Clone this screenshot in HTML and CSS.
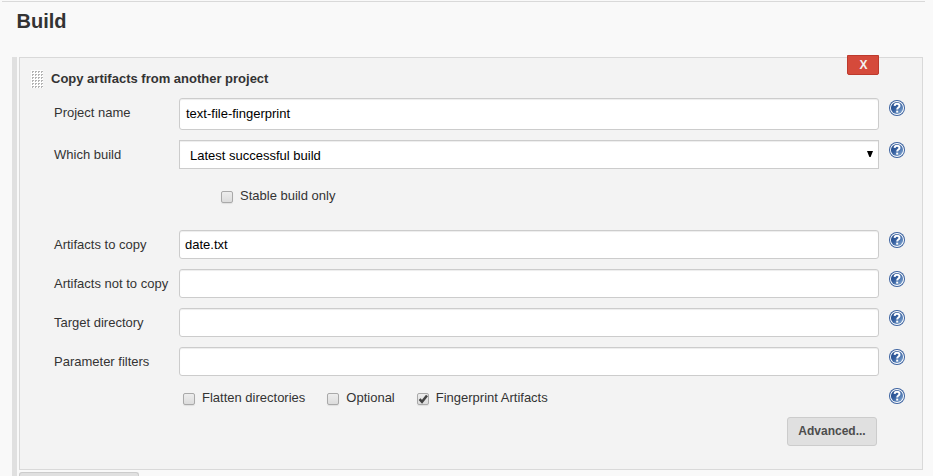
FILE: index.html
```html
<!DOCTYPE html>
<html lang="en">
<head>
<meta charset="utf-8">
<title>Build</title>
<link rel="stylesheet" href="styles.css">
</head>
<body>
<svg class="defs" width="0" height="0" aria-hidden="true">
  <defs>
    <linearGradient id="blue" x1="0" y1="0" x2="1" y2="1">
      <stop offset="0" stop-color="#1f4686"/>
      <stop offset=".45" stop-color="#355f9f"/>
      <stop offset="1" stop-color="#8fb4dc"/>
    </linearGradient>
    <symbol id="help" viewBox="0 0 16 16">
      <circle cx="8" cy="8" r="8" fill="#3b62a0"/>
      <circle cx="8" cy="8" r="7" fill="#fff"/>
      <circle cx="8" cy="8" r="6.1" fill="url(#blue)"/>
      <path d="M5.6 5.9C5.7 4.3 6.6 3.8 8 3.8s2.5.7 2.5 2.1c0 1.6-2.3 1.6-2.3 3.5" fill="none" stroke="#fff" stroke-width="2"/>
      <rect x="7.2" y="10.6" width="2" height="2" fill="#fff"/>
    </symbol>
  </defs>
</svg>
<main class="page">
  <h1 class="title">Build</h1>
  <div class="steps">
    <section class="card">
      <button class="delete">X</button>
      <header class="card-head">
        <svg class="handle" width="12" height="18">
          <defs><pattern id="dots" width="3" height="3" patternUnits="userSpaceOnUse"><rect width="3" height="3" fill="#fff"/><path d="M1 1h2v1h-1v1h-1z" fill="#b4b4b4"/></pattern></defs>
          <rect width="12" height="18" fill="url(#dots)"/>
        </svg>
        <b>Copy artifacts from another project</b>
      </header>
      <div class="row first"><label>Project name</label><div class="input tall">text-file-fingerprint</div><svg class="help"><use href="#help"/></svg></div>
      <div class="row build"><label>Which build</label><div class="input select">Latest successful build<svg width="6" height="6"><path d="M0 0h6L3.6 6H2.4z"/></svg></div><svg class="help"><use href="#help"/></svg></div>
      <div class="stable"><span class="check"></span>Stable build only</div>
      <div class="row"><label>Artifacts to copy</label><div class="input">date.txt</div><svg class="help"><use href="#help"/></svg></div>
      <div class="row"><label>Artifacts not to copy</label><div class="input"></div><svg class="help"><use href="#help"/></svg></div>
      <div class="row"><label>Target directory</label><div class="input"></div><svg class="help"><use href="#help"/></svg></div>
      <div class="row"><label>Parameter filters</label><div class="input"></div><svg class="help"><use href="#help"/></svg></div>
      <div class="row options">
        <span></span>
        <div class="checks">
          <span class="option"><span class="check"></span>Flatten directories</span>
          <span class="option"><span class="check"></span>Optional</span>
          <span class="option"><span class="check"><svg width="10" height="10"><path d="M1.6 5.2L4 7.8L9 1.4" fill="none" stroke="#444" stroke-width="2.5"/></svg></span>Fingerprint Artifacts</span>
        </div>
        <svg class="help"><use href="#help"/></svg>
      </div>
      <button class="advanced">Advanced...</button>
    </section>
    <div class="add"></div>
  </div>
</main>
</body>
</html>
```
FILE: styles.css
```css
* { box-sizing: border-box; }
body {
  margin: 0;
  height: 476px;
  overflow: hidden;
  background: #f9f9f9;
  color: #333;
  font: 13px/16px "Liberation Sans", Arial, sans-serif;
}
.defs { position: absolute; }
.page { margin-left: 2px; padding-top: 1px; width: 923px; }
.title {
  margin: 0;
  height: 56px;
  padding: 8px 0 0 14.5px;
  border-top: 1px solid #d9d9d9;
  font-size: 20px;
  line-height: 23px;
}
.steps {
  width: 911px;
  height: 419px;
  margin-left: 10px;
  padding-left: 2px;
  border-left: 5px solid #e0e0e0;
}
.card {
  position: relative;
  height: 413px;
  border: 1px solid #d9d9d9;
  background: #f3f3f3;
}
.card-head { display: flex; height: 40px; padding: 12px 0 0 11px; gap: 8px; line-height: 17px; }
.handle { display: block; }
.delete {
  position: absolute;
  left: 827px;
  top: -3px;
  width: 32px;
  height: 20px;
  padding: 0 0 0 1px;
  border: 1px solid #bd3a2d;
  border-radius: 0 0 2px 2px;
  background: #d54a3b;
  color: #f2f2f2;
  font: bold 12px/18px "Liberation Sans", Arial, sans-serif;
}
.row {
  display: grid;
  grid-template-columns: 125px 700px 26px;
  height: 39px;
  padding-left: 34px;
  align-items: start;
}
.row.first, .row.build { height: 42px; }
.row label { padding-top: 7px; white-space: nowrap; }
.input {
  height: 29px;
  padding: 0 5px;
  border: 1px solid #ccc;
  border-radius: 3px;
  background: #fff;
  box-shadow: inset 0 1px 1px rgba(0, 0, 0, .075);
  color: #000;
  line-height: 27px;
}
.tall { height: 32px; padding-left: 6px; line-height: 30px; }
.select {
  display: flex;
  justify-content: space-between;
  align-items: center;
  padding: 1px 5px 0 10px;
  border-radius: 0;
}
.select svg { margin-bottom: 3px; }
.help { width: 16px; height: 16px; margin: 2px 0 0 10px; }
.stable { display: flex; height: 48px; padding: 6px 0 0 201px; }
.check {
  flex: none;
  width: 12px;
  height: 12px;
  margin: 3px 7px 0 0;
  border: 1px solid #a9a9a9;
  border-radius: 2px;
  background: linear-gradient(#ededed, #dcdcdc);
  box-shadow: 0 1px 1px rgba(0, 0, 0, .08);
}
.check svg { display: block; }
.row.options { height: 31px; }
.checks { display: flex; gap: 22px; padding: 4px 0 0 4px; }
.option { display: flex; }
.advanced {
  display: block;
  width: 90px;
  height: 29px;
  margin-left: 767px;
  padding: 0 0 1px;
  border: 1px solid #ccc;
  border-radius: 3px;
  background: #e0e0e0;
  color: #4d4d4d;
  font: bold 12px/26px "Liberation Sans", Arial, sans-serif;
}
.add {
  width: 120px;
  height: 4px;
  margin-top: 2px;
  border: 1px solid #ccc;
  border-bottom: 0;
  border-radius: 3px 3px 0 0;
  background: #e0e0e0;
}
```
